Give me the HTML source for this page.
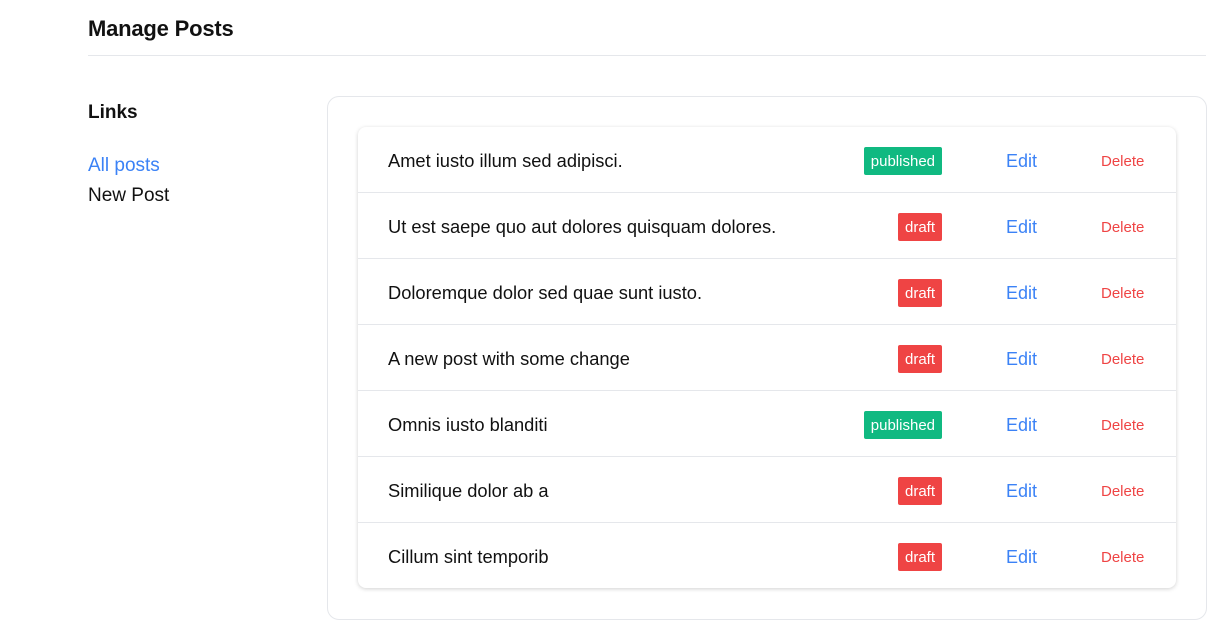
<!DOCTYPE html>
<html><head><meta charset="utf-8"><style>
*{box-sizing:border-box;margin:0;padding:0}
body{width:1231px;height:639px;background:#fff;font-family:"Liberation Sans",sans-serif;color:#111;position:relative;overflow:hidden}
h1{position:absolute;left:88px;top:16px;font-size:22px;font-weight:bold;letter-spacing:-0.2px}
.hr{position:absolute;left:88px;top:55px;width:1118px;height:1px;background:#e5e7eb}
.links{position:absolute;left:88px;top:102px;font-size:19px}
.links b{display:block;margin-bottom:27px}
.links a{display:block;text-decoration:none;line-height:30px;color:#111}
.links a.on{color:#3b82f6}
.outer{position:absolute;left:327px;top:96px;width:880px;height:524px;border:1px solid #e5e7eb;border-radius:12px}
.inner{position:absolute;left:358px;top:127px;width:818px;height:461px;border-radius:8px;box-shadow:0 1px 4px rgba(0,0,0,.18);background:#fff}
.row{position:relative;height:66px;border-top:1px solid #e5e7eb}
.row:first-child{border-top:none;height:65px}
.t{position:absolute;left:30px;top:23px;font-size:18.3px}
.b{position:absolute;right:234px;top:20px;height:28px;line-height:30px;padding:0 7px;color:#fff;font-size:15px;border-radius:2px}
.p{background:#10b981}.d{background:#ef4444}
.e{position:absolute;left:648px;top:24px;font-size:18px;color:#3b82f6}
.x{position:absolute;left:743px;top:26px;font-size:15px;color:#ef4444}
</style></head><body>
<h1>Manage Posts</h1><div class="hr"></div>
<div class="links"><b>Links</b><a class="on">All posts</a><a>New Post</a></div>
<div class="outer"></div>
<div class="inner">
<div class="row"><span class="t">Amet iusto illum sed adipisci.</span><span class="b p">published</span><span class="e">Edit</span><span class="x">Delete</span></div>
<div class="row"><span class="t">Ut est saepe quo aut dolores quisquam dolores.</span><span class="b d">draft</span><span class="e">Edit</span><span class="x">Delete</span></div>
<div class="row"><span class="t">Doloremque dolor sed quae sunt iusto.</span><span class="b d">draft</span><span class="e">Edit</span><span class="x">Delete</span></div>
<div class="row"><span class="t">A new post with some change</span><span class="b d">draft</span><span class="e">Edit</span><span class="x">Delete</span></div>
<div class="row"><span class="t">Omnis iusto blanditi</span><span class="b p">published</span><span class="e">Edit</span><span class="x">Delete</span></div>
<div class="row"><span class="t">Similique dolor ab a</span><span class="b d">draft</span><span class="e">Edit</span><span class="x">Delete</span></div>
<div class="row"><span class="t">Cillum sint temporib</span><span class="b d">draft</span><span class="e">Edit</span><span class="x">Delete</span></div>
</div>
</body></html>
